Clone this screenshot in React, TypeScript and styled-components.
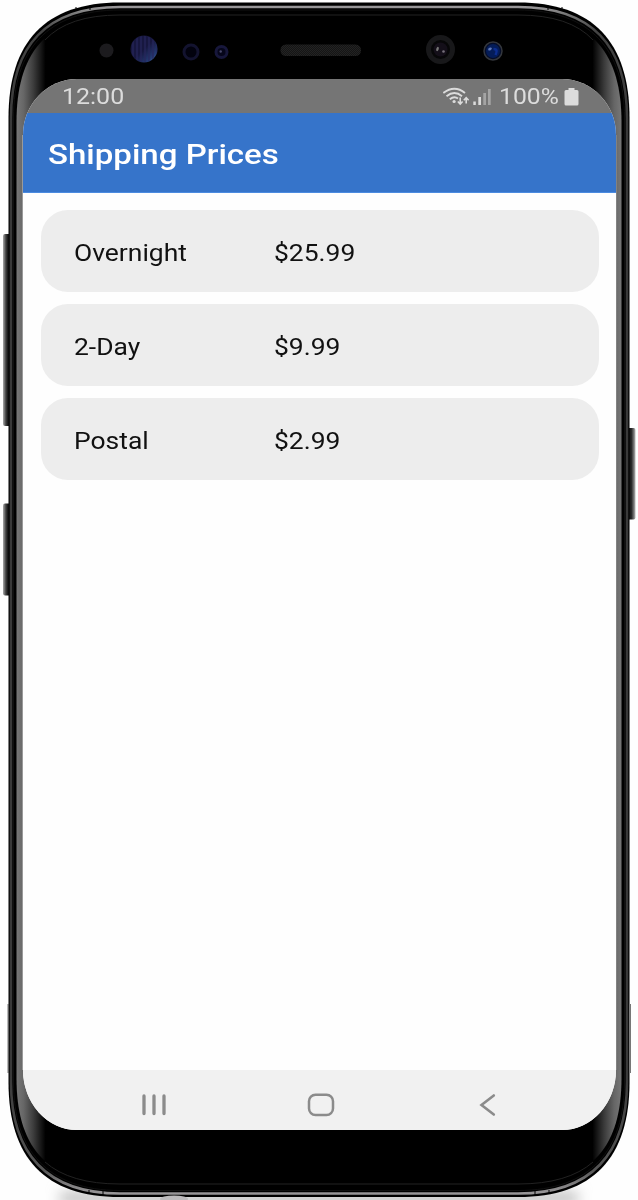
import React from "react";
import styled, { createGlobalStyle } from "styled-components";

const GlobalStyle = createGlobalStyle`
  body { margin: 0; background: #fefefe; font-family: Roboto, "Liberation Sans", sans-serif; }
  * { box-sizing: border-box; }
`;

const Device = styled.main`
  position: relative;
  width: 638px;
  height: 1200px;
  overflow: hidden;
  padding: 79px 22.5px 70px 23px;
`;

const Chassis = styled.svg`
  position: absolute;
  inset: 0;
  z-index: 0;
`;

const Screen = styled.section`
  position: relative;
  z-index: 1;
  height: 100%;
  display: flex;
  flex-direction: column;
  overflow: hidden;
  background: #fefefe;
  border-radius: 54px 54px 54px 54px / 56px 56px 60px 60px;
`;

const StatusBar = styled.header`
  height: 33.5px;
  flex: none;
  display: flex;
  align-items: center;
  padding: 2px 37px 0 38.5px;
  background: #757575;
  color: #dcdcdc;
`;

const Stretch = styled.span<{ size: number; weight?: number; scale?: number }>`
  display: inline-block;
  white-space: nowrap;
  font-size: ${(p) => p.size}px;
  font-weight: ${(p) => p.weight ?? 400};
  line-height: 1.2;
  transform: scaleX(${(p) => p.scale ?? 1.15});
  transform-origin: left center;
`;

const StatusIcons = styled.div`
  margin-left: auto;
  display: flex;
  align-items: center;
`;

const StatusText = styled.div`
  padding-top: 1.5px;
`;

const Percent = styled(StatusText)`
  width: 64.5px;
  margin-left: 7px;
`;

const TitleBar = styled.div`
  height: 80.5px;
  flex: none;
  display: flex;
  align-items: center;
  padding: 6px 25px 0;
  background: #3674ca;
  border-bottom: 1px solid #4b8be0;
  color: #fff;
`;

const Title = styled.h1`
  margin: 0;
  font: inherit;
`;

const PriceList = styled.ul`
  flex: 1;
  margin: 0;
  padding: 17px 16.5px 0 18px;
  list-style: none;
  display: flex;
  flex-direction: column;
  gap: 11.8px;
`;

const PriceCard = styled.li`
  height: 82.200px;
  display: grid;
  grid-template-columns: 199.500px 1fr;
  align-items: center;
  padding: 5px 33px 0 33px;
  border-radius: 27px;
  background: #ededed;
  color: #111;
`;

const NavBar = styled.nav`
  height: 60px;
  flex: none;
  display: flex;
  align-items: center;
  justify-content: space-between;
  padding: 9px 114px 0 117px;
  background: #f1f1f1;
`;

const PRICES = [
  { name: "Overnight", price: "$25.99" },
  { name: "2-Day", price: "$9.99" },
  { name: "Postal", price: "$2.99" },
];

const shell =
  "M8.5 118C8.5 42 45 2.5 120 2.5H518C593 2.5 629.5 42 629.5 118V1082C629.5 1158 593 1197 518 1197H120C45 1197 8.5 1158 8.5 1082Z";
const rim =
  "M11 118C11 45 47 7 120 7H518C591 7 627 45 627 118V1082C627 1154 591 1193.500 518 1193.500H120C47 1193.500 11 1154 11 1082Z";
const innerRim =
  "M13.500 118C13.500 50 47 10 120 10H518C591 10 624.500 50 624.500 118V1082C624.500 1150 591 1190.500 518 1190.500H120C47 1190.500 13.500 1150 13.500 1082Z";
const bezel =
  "M16.500 122C16.500 56 44 14.500 120 14.500H518C594 14.500 621.500 56 621.500 122V1078C621.500 1144 594 1184 518 1184H120C44 1184 16.500 1144 16.500 1078Z";

const DeviceArt = () => (
  <Chassis width="638" height="1200" viewBox="0 0 638 1200" aria-hidden="true">
    <defs>
      <linearGradient id="rimTone" x1="0" y1="0" x2="0" y2="1">
        <stop offset="0" stopColor="#989698" />
        <stop offset="0.006" stopColor="#777" />
        <stop offset="0.02" stopColor="#444" />
        <stop offset="0.1" stopColor="#3a3a3a" />
        <stop offset="0.9" stopColor="#3a3a3a" />
        <stop offset="0.98" stopColor="#555" />
        <stop offset="1" stopColor="#989698" />
      </linearGradient>
      <linearGradient id="sideGlass" gradientUnits="userSpaceOnUse" x1="16.500" y1="0" x2="621.500" y2="0">
        <stop offset="0" stopColor="#777" />
        <stop offset="0.012" stopColor="#666" />
        <stop offset="0.028" stopColor="#3c3c3c" />
        <stop offset="0.048" stopColor="#000" />
        <stop offset="0.952" stopColor="#000" />
        <stop offset="0.972" stopColor="#3c3c3c" />
        <stop offset="0.988" stopColor="#666" />
        <stop offset="1" stopColor="#777" />
      </linearGradient>
      <linearGradient id="keyLeft">
        <stop offset="0" stopColor="#aaa" />
        <stop offset="0.35" stopColor="#444" />
        <stop offset="0.6" stopColor="#171717" />
        <stop offset="1" stopColor="#222" />
      </linearGradient>
      <linearGradient id="keyRight">
        <stop offset="0" stopColor="#111" />
        <stop offset="0.5" stopColor="#222" />
        <stop offset="0.75" stopColor="#666" />
        <stop offset="1" stopColor="#bbb" />
      </linearGradient>
      <linearGradient id="lensBlue" x1="0" y1="0" x2="1" y2="1">
        <stop offset="0.5" stopColor="#17173f" />
        <stop offset="0.8" stopColor="#243a72" />
        <stop offset="1" stopColor="#5484bb" />
      </linearGradient>
      <pattern id="stripes" width="4" height="4" patternUnits="userSpaceOnUse">
        <rect width="2" height="4" fill="#27275c" opacity="0.6" />
      </pattern>
      <pattern id="mesh" width="2" height="2" patternUnits="userSpaceOnUse">
        <rect width="2" height="2" fill="#151515" />
        <rect width="1" height="1" fill="#232323" />
        <rect x="1" y="1" width="1" height="1" fill="#232323" />
      </pattern>
      <filter id="soft" x="-20%" y="-200%" width="140%" height="500%">
        <feGaussianBlur stdDeviation="7" />
      </filter>
    </defs>

    <rect x="60" y="1192" width="518" height="12" fill="#bbb" filter="url(#soft)" />
    <rect x="3" y="234" width="8" height="192" rx="2" fill="url(#keyLeft)" />
    <rect x="3" y="503.500" width="8" height="92" rx="2" fill="url(#keyLeft)" />
    <rect x="627" y="428" width="8.500" height="91.500" rx="2" fill="url(#keyRight)" />
    <path d="M8 1004V1073M630.500 1004V1073" stroke="#777" />
    <path d={shell} fill="#000" />
    <path d={rim} fill="none" stroke="url(#rimTone)" strokeWidth="2.600" />
    <path d={innerRim} fill="none" stroke="#101010" strokeWidth="1" />
    <path d="M76 7V11M90 5.500V10M548 5.500V10M562 7V11M89 1190V1194M103 1191V1195M535 1191V1195M549 1190V1194" stroke="#000" />
    <path d={bezel} fill="url(#sideGlass)" />
    <path d="M45 40Q68 15 120 15H518Q570 15 593 40M45 1162Q70 1184 120 1184H518Q568 1184 593 1162" fill="none" stroke="#222" />
    <path d="M22.500 135V1070M616 135V1070" stroke="#9a9a9a" />

    <circle cx="106.500" cy="50.500" r="7" fill="#1c1b1e" />
    <circle cx="144" cy="49" r="13.500" fill="url(#lensBlue)" />
    <circle cx="144" cy="49" r="13" fill="url(#stripes)" />
    <circle cx="191" cy="52" r="7" fill="#02020e" stroke="#13132f" strokeWidth="3" />
    <circle cx="221.500" cy="52" r="5.500" fill="#06061a" stroke="#17173b" strokeWidth="3" />
    <circle cx="220.700" cy="51.500" r="1.200" fill="#48486a" />
    <rect x="280.500" y="44.500" width="80.500" height="11.500" rx="5.500" fill="url(#mesh)" />
    <circle cx="440.500" cy="49.500" r="12" fill="#070708" stroke="#18181a" strokeWidth="5" />
    <circle cx="440.500" cy="49.500" r="7" fill="#140f19" />
    <ellipse cx="437.500" cy="49" rx="1.200" ry="2.200" fill="#777" transform="rotate(20 437.500 49)" />
    <ellipse cx="443.500" cy="51.500" rx="1.300" ry="1.200" fill="#77717c" />
    <circle cx="493" cy="51" r="9" fill="#050d28" stroke="#33363c" strokeWidth="1.500" />
    <circle cx="493" cy="51" r="7" fill="#041c58" />
    <path d="M493.500 49q5 0 2 6" stroke="#0c2d90" strokeWidth="2.500" fill="none" />
    <ellipse cx="490" cy="49" rx="2" ry="1.300" fill="#5d77b5" transform="rotate(-30 490 49)" />
    <ellipse cx="174" cy="1199" rx="14" ry="3.500" fill="#bdbbbd" />
  </Chassis>
);

const WifiIcon = () => (
  <svg width="27" height="19" viewBox="0 0 27 19" fill="none" stroke="#dcdcdc" strokeWidth="1.900">
    <path d="M.3 6Q11.500-2.500 22 6M3.500 9.200Q11.500 3 19 9.200M6.800 12.200Q11.200 8.600 15 11.500" />
    <circle cx="11.100" cy="14.500" r="1.600" fill="#dcdcdc" stroke="none" />
    <path d="M17.200 10.500V16.500M14.800 14.500L17.200 17L19.600 14.500M23.200 16.500V11M20.800 13.200L23.200 10.700L25.600 13.200" strokeWidth="1.600" />
  </svg>
);

const SignalIcon = () => (
  <svg width="19" height="18" viewBox="0 0 19 18" fill="#dcdcdc">
    <rect x="0.300" y="13.500" width="2.500" height="3.500" />
    <rect x="5.300" y="9" width="2.700" height="8" />
    <rect x="10.300" y="5" width="2.700" height="12" fill="#a4a4a4" />
    <rect x="15" y="1" width="2.700" height="16" fill="#a4a4a4" />
  </svg>
);

const BatteryIcon = () => (
  <svg width="15" height="18" viewBox="0 0 15 18" fill="#dcdcdc">
    <path d="M4.500 0H10.500V2H13Q14.500 2 14.500 3.500V16Q14.500 17.500 13 17.500H2Q.5 17.500 .5 16V3.500Q.5 2 2 2H4.500Z" />
  </svg>
);

export default function App() {
  return (
    <>
      <GlobalStyle />
      <Device>
        <DeviceArt />
        <Screen>
          <StatusBar>
            <StatusText>
              <Stretch size={22} scale={1.135}>12:00</Stretch>
            </StatusText>
            <StatusIcons>
              <WifiIcon />
              <svg width="3.500" height="1" />
              <SignalIcon />
              <Percent>
                <Stretch size={22} scale={1.125}>100%</Stretch>
              </Percent>
              <BatteryIcon />
            </StatusIcons>
          </StatusBar>
          <TitleBar>
            <Title>
              <Stretch size={28} weight={500} scale={1.18}>Shipping Prices</Stretch>
            </Title>
          </TitleBar>
          <PriceList>
            {PRICES.map((item) => (
              <PriceCard key={item.name}>
                <Stretch size={23}>{item.name}</Stretch>
                <Stretch size={23}>{item.price}</Stretch>
              </PriceCard>
            ))}
          </PriceList>
          <NavBar>
            <svg width="28" height="24" viewBox="0 0 28 24" stroke="#8b8b8b" strokeWidth="3.300" strokeLinecap="round">
              <path d="M4 3V20.500M14 3V20.500M24 3V20.500" />
            </svg>
            <svg width="28" height="24" viewBox="0 0 28 24" fill="none" stroke="#8b8b8b" strokeWidth="2.500">
              <rect x="2" y="1.700" width="24" height="20.400" rx="6.500" />
            </svg>
            <svg width="28" height="24" viewBox="0 0 28 24" fill="none" stroke="#8b8b8b" strokeWidth="2.600" strokeLinecap="round">
              <path d="M19.800 2.500L7.500 12L19.800 21.500" />
            </svg>
          </NavBar>
        </Screen>
      </Device>
    </>
  );
}
